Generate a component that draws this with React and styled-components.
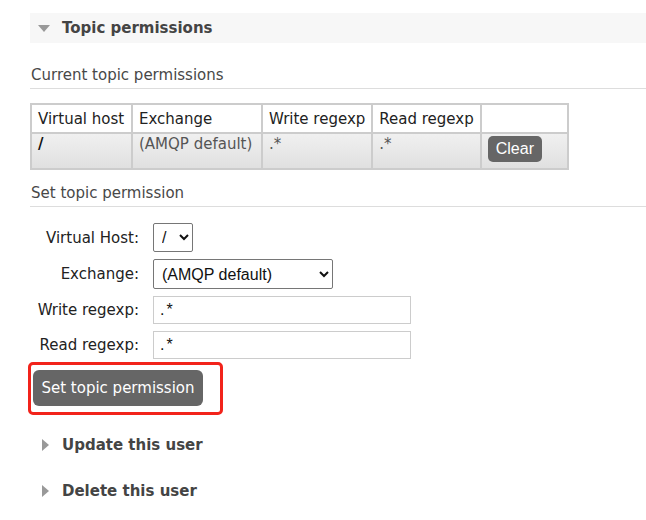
import React from 'react';
import styled, { createGlobalStyle } from 'styled-components';

const GlobalStyle = createGlobalStyle`
  body {
    margin: 0;
    background: #fff;
    font-family: "DejaVu Sans", Verdana, sans-serif;
    color: #484848;
  }
`;

const Page = styled.div`
  position: relative;
  padding: 13px 0 0 30px;
  width: 616px;
`;

const SectionHeader = styled.div`
  display: flex;
  align-items: center;
  height: 30px;
  padding-left: 8px;
  gap: 12px;
  background: ${({ open }) => (open ? '#f7f7f7' : 'transparent')};
  font-size: 15px;
  font-weight: bold;
  color: #444;
`;

const Arrow = styled.span`
  width: 0;
  height: 0;
  ${({ open }) =>
    open
      ? `border-left: 6px solid transparent;
         border-right: 6px solid transparent;
         border-top: 7px solid #999;`
      : `border-top: 6px solid transparent;
         border-bottom: 6px solid transparent;
         border-left: 7px solid #999;
         margin-left: 4px;
         margin-right: 1px;`}
`;

const SubTitle = styled.div`
  margin-top: ${({ top }) => top}px;
  padding: 0 0 4px 1px;
  border-bottom: 1px solid #ddd;
  font-size: 15px;
  color: #484848;
`;

const Table = styled.table`
  margin-top: 14px;
  border-collapse: collapse;
  border: 2px solid #ccc;
  font-size: 15px;
`;

const Th = styled.th`
  width: ${({ w }) => w}px;
  height: 27px;
  padding: 0 6px;
  text-align: left;
  font-weight: normal;
  color: #222;
  border: 2px solid #ccc;
  white-space: nowrap;
`;

const Td = styled.td`
  height: 33px;
  padding: 1px 6px 0;
  vertical-align: top;
  border: 2px solid #ccc;
  background: linear-gradient(#f0f0f0, #e0e0e0);
  color: ${({ strong }) => (strong ? '#111' : '#555')};
  font-weight: ${({ strong }) => (strong ? 'bold' : 'normal')};
  white-space: nowrap;
`;

const ClearButton = styled.button`
  margin-top: 1px;
  height: 26px;
  padding: 0 8px;
  border: 0;
  border-radius: 5px;
  background: #666;
  color: #fff;
  font-family: "Liberation Sans", Arial, sans-serif;
  font-size: 16px;
`;

const Form = styled.div`
  display: grid;
  grid-template-columns: 109px auto;
  column-gap: 14px;
  row-gap: 7px;
  align-items: center;
  margin-top: 16px;
`;

const Label = styled.label`
  text-align: right;
  font-size: 15px;
  line-height: 18px;
  color: #222;
  white-space: nowrap;
`;

const Select = styled.select`
  justify-self: start;
  width: ${({ w }) => w}px;
  height: ${({ h }) => h}px;
  padding: 0 4px;
  border: 1px solid #767676;
  border-radius: 2px;
  background: #fff;
  color: #111;
  font-family: "Liberation Sans", Arial, sans-serif;
  font-size: 16px;
`;

const Input = styled.input`
  box-sizing: border-box;
  width: 258px;
  height: 28px;
  padding: 0 6px;
  border: 1px solid #ccc;
  font-family: "Liberation Sans", Arial, sans-serif;
  font-size: 16px;
  letter-spacing: 2px;
  color: #111;
`;

const SubmitWrap = styled.div`
  margin: 11px 0 0 3px;
`;

const SubmitButton = styled.button`
  width: 170px;
  height: 36px;
  border: 0;
  border-radius: 6px;
  background: #666;
  color: #fff;
  font-family: "DejaVu Sans", Verdana, sans-serif;
  font-size: 15px;
`;

const Highlight = styled.div`
  position: absolute;
  left: 28px;
  top: 362px;
  width: 189px;
  height: 47px;
  border: 3px solid #f2231b;
  border-radius: 5px;
  pointer-events: none;
`;

const Collapsed = styled.div`
  margin-top: ${({ top }) => top}px;
`;

const columns = [
  ['Virtual host', 87],
  ['Exchange', 116],
  ['Write regexp', 96],
  ['Read regexp', 94],
  ['', 73],
];

const App = () => (
  <Page>
    <GlobalStyle />
    <SectionHeader open>
      <Arrow open />
      Topic permissions
    </SectionHeader>

    <SubTitle top={23}>Current topic permissions</SubTitle>
    <Table>
      <thead>
        <tr>
          {columns.map(([name, w], i) => (
            <Th key={i} w={w}>
              {name}
            </Th>
          ))}
        </tr>
      </thead>
      <tbody>
        <tr>
          <Td strong>/</Td>
          <Td>(AMQP default)</Td>
          <Td>.*</Td>
          <Td>.*</Td>
          <Td>
            <ClearButton>Clear</ClearButton>
          </Td>
        </tr>
      </tbody>
    </Table>

    <SubTitle top={14}>Set topic permission</SubTitle>
    <Form>
      <Label>Virtual Host:</Label>
      <Select w={40} h={29}>
        <option>/</option>
      </Select>
      <Label>Exchange:</Label>
      <Select w={180} h={30}>
        <option>(AMQP default)</option>
      </Select>
      <Label>Write regexp:</Label>
      <Input defaultValue=".*" />
      <Label>Read regexp:</Label>
      <Input defaultValue=".*" />
    </Form>
    <SubmitWrap>
      <SubmitButton>Set topic permission</SubmitButton>
    </SubmitWrap>

    <Collapsed top={24}>
      <SectionHeader>
        <Arrow />
        Update this user
      </SectionHeader>
    </Collapsed>
    <Collapsed top={16}>
      <SectionHeader>
        <Arrow />
        Delete this user
      </SectionHeader>
    </Collapsed>

    <Highlight />
  </Page>
);

export default App;
